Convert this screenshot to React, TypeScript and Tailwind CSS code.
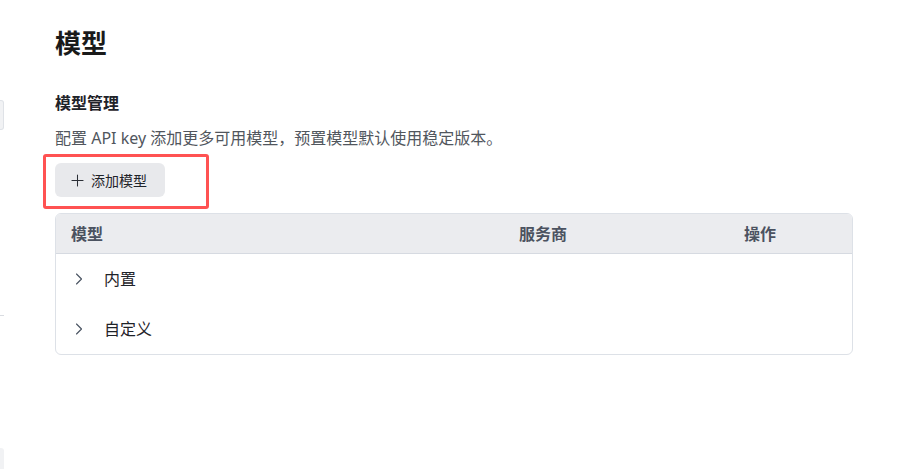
import React from "react";
import { ChevronRight, Plus } from "lucide-react";

const font = { fontFamily: '"Noto Sans", "Noto Sans CJK SC", sans-serif' };

function GroupRow({ label }: { label: string }) {
  return (
    <div className="h-[50px] flex items-center pl-[13px] text-[16px] text-[#1f2329]">
      <ChevronRight className="w-[20px] h-[20px] text-[#4b5563]" strokeWidth={1.4} />
      <span className="ml-[15px]">{label}</span>
    </div>
  );
}

export default function App() {
  return (
    <div className="w-[911px] h-[469px] bg-white flex overflow-hidden" style={font}>
      {/* sidebar edge peeking in */}
      <div className="w-[4px] shrink-0 flex flex-col">
        <div className="mt-[100px] h-[30px] bg-[#f1f2f4] border border-l-0 border-[#dfe2e7] rounded-r-[3px]" />
        <div className="mt-[185px] h-px bg-[#d9dce1]" />
        <div className="mt-auto h-[21px] bg-[#f1f2f4] rounded-tr-[3px]" />
      </div>

      <div className="flex-1 pl-[51px] pr-[58px] pt-[26px]">
        <h1 className="text-[26px] leading-[34px] font-bold text-[#1a1a1a]">模型</h1>

        <h2 className="mt-[31px] text-[16px] leading-[24px] font-bold text-[#1f2329]">模型管理</h2>
        <p className="mt-[11px] text-[16px] leading-[24px] text-[#51565d]">
          配置 API key 添加更多可用模型，预置模型默认使用稳定版本。
        </p>

        <div className="mt-[13px] relative w-fit">
          <button className="h-[34px] w-[110px] pl-[13px] flex items-center gap-[4px] rounded-[6px] bg-[#e8e9ec] text-[14px] text-[#1f2329]">
            <Plus className="w-[19px] h-[19px] text-[#2b2f36]" strokeWidth={1.3} />
            <span>添加模型</span>
          </button>
          {/* highlight annotation */}
          <div className="absolute left-[-12px] top-[-9px] w-[166px] h-[55px] border-[3px] border-[#ff5252] rounded-[3px]" />
        </div>

        <div className="mt-[16px] border border-[#dde1e7] rounded-[6px] overflow-hidden">
          <div className="h-[40px] bg-[#ebecef] border-b border-[#d6dae1] grid grid-cols-[448px_225px_1fr] items-center pl-[15px] text-[16px] font-semibold text-[#4b5260]">
            <span>模型</span>
            <span>服务商</span>
            <span>操作</span>
          </div>
          <GroupRow label="内置" />
          <GroupRow label="自定义" />
        </div>
      </div>
    </div>
  );
}
